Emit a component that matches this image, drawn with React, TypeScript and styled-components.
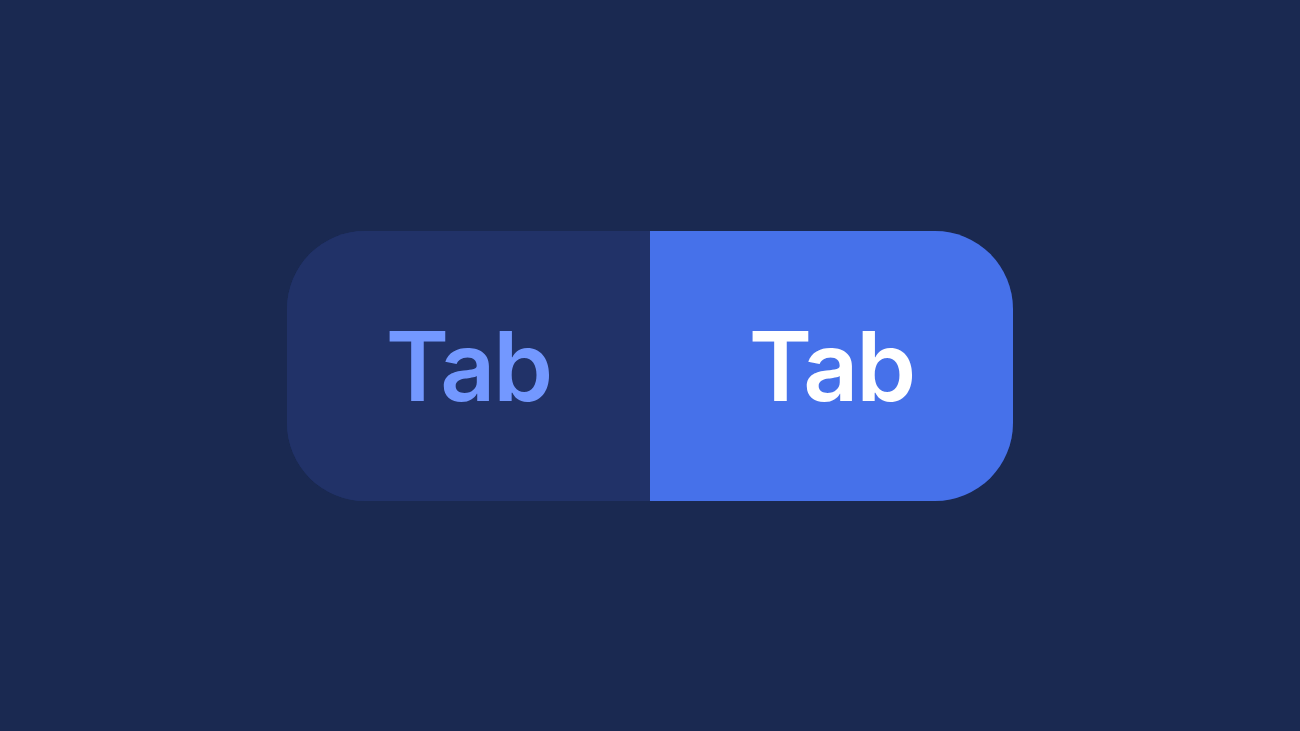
import { useState } from "react";
import styled, { createGlobalStyle } from "styled-components";

const GlobalStyle = createGlobalStyle`
  html, body {
    margin: 0;
    padding: 0;
    background: #1a2951;
  }
  #root {
    min-height: 100vh;
  }
`;

/* ── Styles ── */

const Page = styled.div`
  height: 731px;
  display: flex;
  align-items: center;
  justify-content: center;
  padding-top: 1px;
  box-sizing: border-box;
`;

const TabBar = styled.div`
  display: flex;
  width: 726px;
  height: 270px;
  border-radius: 78px;
  overflow: hidden;
  background: #213268;
`;

const TabButton = styled.button<{ $active?: boolean }>`
  flex: 1;
  display: flex;
  align-items: center;
  justify-content: center;
  border: none;
  margin: 0;
  padding: 0;
  cursor: pointer;
  font-family: Inter, "Open Sans", sans-serif;
  font-size: 96px;
  font-weight: 600;
  letter-spacing: -2px;
  background: ${({ $active }) => ($active ? "#4671ea" : "#213268")};
  color: ${({ $active }) => ($active ? "#ffffff" : "#7398ff")};
`;

export default function App() {
	const [active, setActive] = useState(1);

	return (
		<>
			<GlobalStyle />
			<Page>
				<TabBar>
					{[0, 1].map((i) => (
						<TabButton key={i} $active={active === i} onClick={() => setActive(i)}>
							Tab
						</TabButton>
					))}
				</TabBar>
			</Page>
		</>
	);
}
